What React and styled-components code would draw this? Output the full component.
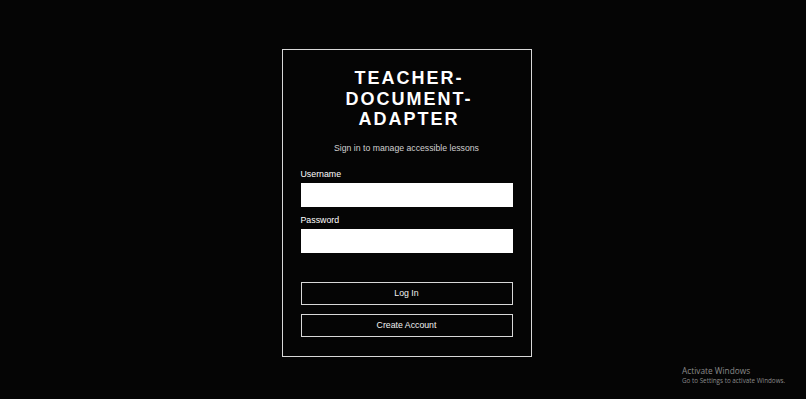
import React, { useState } from 'react'
import styled, { createGlobalStyle } from 'styled-components'

const GlobalStyle = createGlobalStyle`
  html, body {
    margin: 0;
    padding: 0;
    background: #050505;
    font-family: "Liberation Sans", Arial, sans-serif;
  }
`

const Page = styled.main`
  min-height: 399px;
  display: flex;
  justify-content: center;
  align-items: flex-start;
  padding: 49px 0 0 7px;
  box-sizing: border-box;
  position: relative;
`

const Card = styled.form`
  width: 250px;
  box-sizing: border-box;
  border: 1px solid #d8d8d8;
  background: #050505;
  padding: 18px 18px 19px;
  display: flex;
  flex-direction: column;
`

const Title = styled.h1`
  margin: 0;
  color: #fff;
  font-size: 18px;
  line-height: 20.5px;
  font-weight: 700;
  letter-spacing: 2px;
  text-align: center;
  padding: 0 28px 0 33px;
`

const Subtitle = styled.p`
  margin: 12px 0 14px;
  color: #d0d0d0;
  font-size: 8.7px;
  line-height: 12px;
  text-align: center;
`

const Field = styled.label`
  display: flex;
  flex-direction: column;
  gap: 3px;
  color: #fff;
  font-size: 8.8px;
  line-height: 12px;
  margin-bottom: ${p => p.$last ? '29px' : '7px'};
`

const Input = styled.input`
  height: 24px;
  box-sizing: border-box;
  border: 1px solid #fff;
  background: #fff;
  margin: 0;
  padding: 0 6px;
  font-family: inherit;
  outline: none;
`

const Button = styled.button`
  height: 23px;
  box-sizing: border-box;
  background: transparent;
  border: 1px solid #d8d8d8;
  color: #f2f2f2;
  font-family: inherit;
  font-size: 8.75px;
  cursor: pointer;
  margin-top: ${p => p.$gap || 0}px;
`

const Watermark = styled.div`
  position: absolute;
  left: 682px;
  top: 365px;
  color: #8a8a8a;
  font-family: "Open Sans", "Liberation Sans", sans-serif;
  .big {
    font-size: 8.3px;
    line-height: 11px;
  }
  .small {
    font-size: 6.3px;
    line-height: 9px;
  }
`

const App = () => {
  const [username, setUsername] = useState('')
  const [password, setPassword] = useState('')

  const handleSubmit = (e) => {
    e.preventDefault()
  }

  return (
    <>
      <GlobalStyle />
      <Page>
        <Card onSubmit={handleSubmit}>
          <Title>TEACHER-DOCUMENT-ADAPTER</Title>
          <Subtitle>Sign in to manage accessible lessons</Subtitle>
          <Field>
            Username
            <Input value={username} onChange={e => setUsername(e.target.value)} />
          </Field>
          <Field $last>
            Password
            <Input type='password' value={password} onChange={e => setPassword(e.target.value)} />
          </Field>
          <Button type='submit'>Log In</Button>
          <Button type='button' $gap={9}>Create Account</Button>
        </Card>
        <Watermark>
          <div className='big'>Activate Windows</div>
          <div className='small'>Go to Settings to activate Windows.</div>
        </Watermark>
      </Page>
    </>
  )
}

export default App
